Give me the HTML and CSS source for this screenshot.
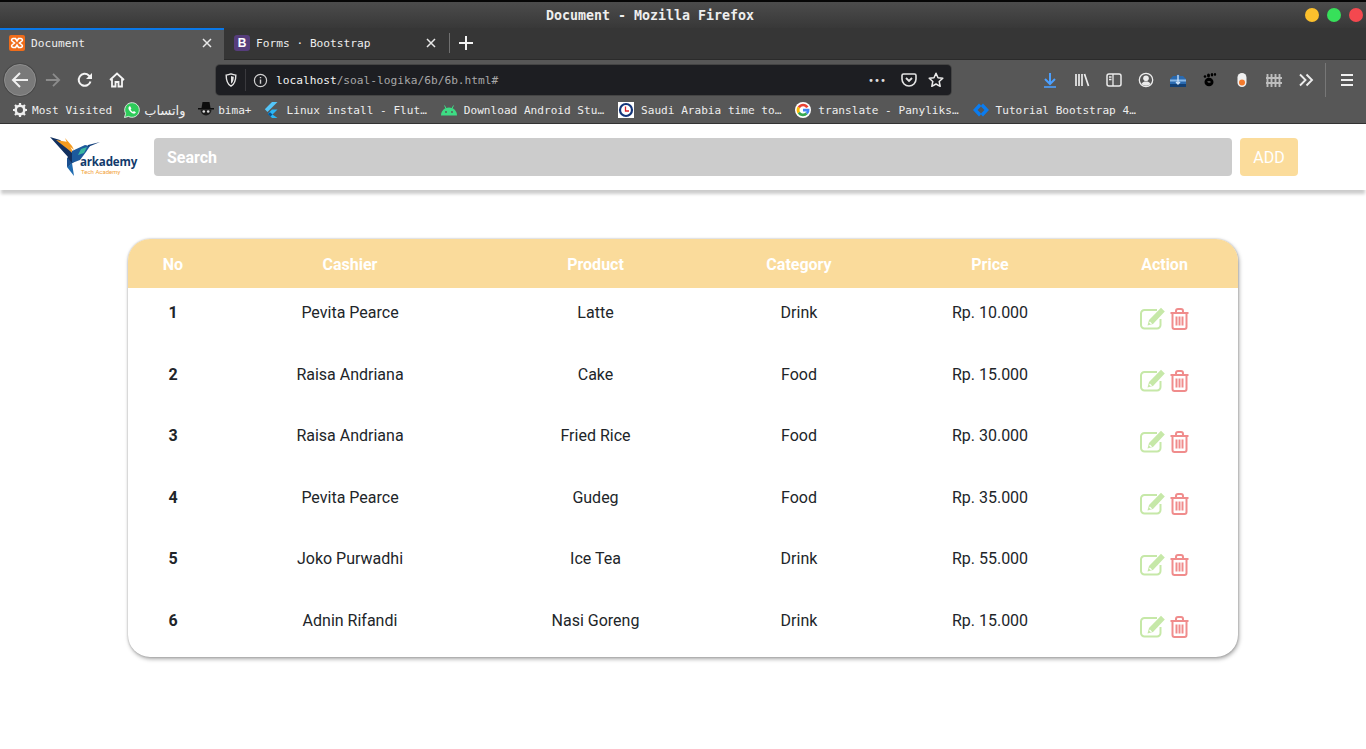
FILE: index.html
```html
<!DOCTYPE html>
<html lang="en">
<head>
<meta charset="utf-8">
<title>Document</title>
<link rel="stylesheet" href="styles.css">
</head>
<body>
<svg class="defs" width="0" height="0">
  <symbol id="edit" viewBox="0 0 25 23">
    <path d="M17 3H4.500A3.500 3.500 0 0 0 1 6.500V18a3.500 3.500 0 0 0 3.500 3.500H17a3.500 3.500 0 0 0 3.500-3.500v-6" fill="none" stroke="currentColor" stroke-width="2"/>
    <path d="M21 .8L24.800 4.600 13 17l-5.500 1.500L9 13z" fill="currentColor"/>
    <path d="M9.500 15l2 2" stroke="#fff" stroke-width="1.200"/>
  </symbol>
  <symbol id="trash" viewBox="0 0 19 22">
    <path d="M.5 5h18M6 5V3a2 2 0 0 1 2-2h3a2 2 0 0 1 2 2v2M2.500 5v14a2 2 0 0 0 2 2h10a2 2 0 0 0 2-2V5M6.500 8.500v9M9.500 8.500v9M12.500 8.500v9" fill="none" stroke="currentColor" stroke-width="2"/>
  </symbol>
</svg>

<header class="chrome">
  <div class="titlebar">
    <span class="title">Document - Mozilla Firefox</span>
    <div class="lights"><i class="light yellow"></i><i class="light green"></i><i class="light red"></i></div>
  </div>
  <div class="tabbar">
    <div class="tab active">
      <svg class="fav" viewBox="0 0 16 16"><rect width="16" height="16" rx="2" fill="#ef6c1a"/><path d="M4 3.500h2.500L8 6l1.500-2.500H12a1.500 1.500 0 0 1 1 2.500l-2.500 2 2.500 2a1.500 1.500 0 0 1-1 2.500H9.500L8 10l-1.500 2.500H4A1.500 1.500 0 0 1 3 10l2.500-2L3 6a1.500 1.500 0 0 1 1-2.500z" fill="none" stroke="#fff" stroke-width="1.600"/></svg>
      <span class="tab-label">Document</span>
      <svg class="tab-x" viewBox="0 0 12 12"><path d="M2 2l8 8M10 2l-8 8" stroke="#e8e8e8" stroke-width="1.500"/></svg>
    </div>
    <div class="tab">
      <span class="b-fav">B</span>
      <span class="tab-label">Forms · Bootstrap</span>
      <svg class="tab-x" viewBox="0 0 12 12"><path d="M2 2l8 8M10 2l-8 8" stroke="#e8e8e8" stroke-width="1.500"/></svg>
    </div>
    <i class="tab-sep"></i>
    <svg class="plus" viewBox="0 0 16 16"><path d="M8 1v14M1 8h14" stroke="#f4f4f4" stroke-width="2"/></svg>
  </div>
  <div class="navbar">
    <div class="btns">
      <div class="btn back"><svg viewBox="0 0 18 18"><path d="M17 9H2M9 2L2 9l7 7" fill="none" stroke="#f0f0f0" stroke-width="2"/></svg></div>
      <div class="btn"><svg viewBox="0 0 18 18"><path d="M1 9h15M9 2l7 7-7 7" fill="none" stroke="#8c8c8c" stroke-width="2"/></svg></div>
      <div class="btn"><svg viewBox="0 0 16 16"><path d="M13.500 9.500A6 6 0 1 1 11.800 3.400L14 5.500" fill="none" stroke="#f4f4f4" stroke-width="2"/><path d="M15 1v6H9z" fill="#f4f4f4"/></svg></div>
      <div class="btn"><svg viewBox="0 0 16 16"><path d="M1 8l7-6.500L15 8M3 7v7.500h3.500V10h3v4.500H13V7" fill="none" stroke="#f4f4f4" stroke-width="1.800"/></svg></div>
    </div>
    <div class="urlbar">
      <svg class="shield" viewBox="0 0 16 16"><path d="M2.500 2.500C5 2 6.500 1.500 8 1c1.500.5 3 1 5.500 1.500 0 6-1 10-5.500 12.500C3.500 12.500 2.500 8.500 2.500 2.500z" fill="none" stroke="#e4e4e4" stroke-width="1.600"/><path d="M8 3.500c1 .3 2 .6 3.200.9-.1 3.800-.8 6.400-3.200 8z" fill="#e4e4e4"/></svg>
      <i class="url-sep"></i>
      <svg class="info" viewBox="0 0 16 16"><circle cx="8" cy="8" r="6.500" fill="none" stroke="#d0d0d0" stroke-width="1.300"/><path d="M8 7v4.500M8 4.300v1.400" stroke="#d0d0d0" stroke-width="1.500"/></svg>
      <span class="url"><b class="host">localhost</b>/soal-logika/6b/6b.html#</span>
      <span class="dots">•••</span>
      <svg class="url-ico" viewBox="0 0 16 16"><path d="M1 3.500A1.500 1.500 0 0 1 2.500 2h11A1.500 1.500 0 0 1 15 3.500V7a7 7 0 0 1-14 0z" fill="none" stroke="#e4e4e4" stroke-width="1.600"/><path d="M5 6l3 3 3-3" fill="none" stroke="#e4e4e4" stroke-width="1.800"/></svg>
      <svg class="url-ico star" viewBox="0 0 16 16"><path d="M8 1.300l2 4.500 4.800.5-3.600 3.200 1 4.800L8 12l-4.200 2.300 1-4.800L1.200 6.300 6 5.800z" fill="none" stroke="#ececec" stroke-width="1.500" stroke-linejoin="round"/></svg>
    </div>
    <div class="btns tools">
      <div class="btn"><svg viewBox="0 0 16 16"><path d="M8 1v10M3 7l5 5 5-5" fill="none" stroke="#4c9ffe" stroke-width="2"/><path d="M2 15h12" stroke="#4c9ffe" stroke-width="1.600"/></svg></div>
      <div class="btn"><svg viewBox="0 0 16 16"><path d="M2 2v12M5 2v12M8 2v12M10.500 2l4 12" stroke="#ececec" stroke-width="1.700"/></svg></div>
      <div class="btn"><svg viewBox="0 0 16 16"><rect x="1" y="2" width="14" height="12" rx="2" fill="none" stroke="#ececec" stroke-width="1.500"/><path d="M7 2v12M3 5h2.500M3 7.500h2.500" stroke="#ececec" stroke-width="1.300"/></svg></div>
      <div class="btn"><svg viewBox="0 0 16 16"><circle cx="8" cy="8" r="6.700" fill="none" stroke="#ececec" stroke-width="1.300"/><circle cx="8" cy="6.300" r="2.800" fill="#ececec"/><path d="M3.500 12c1-2 2.500-2.500 4.500-2.500s3.500.5 4.500 2.500c-2.500 2.200-6.500 2.200-9 0z" fill="#ececec"/></svg></div>
      <div class="btn"><svg viewBox="0 0 16 16"><path d="M0 7l3-3h3l2-2 2 2h3l3 3v8H0z" fill="#2a6ab0"/><path d="M0 7.500h16v2H0z" fill="#8ab8e6"/><path d="M0 12h16v3H0z" fill="#123f73"/><path d="M8 3v9M6 10l2 2 2-2" fill="none" stroke="#cfe4fa" stroke-width="1.300"/></svg></div>
      <div class="btn"><svg viewBox="0 0 16 16"><ellipse cx="7" cy="10" rx="4.500" ry="4.300" fill="#000"/><path d="M5 9.500c1.500-.8 3-.8 4 .5-1 1-2.500 1-3 .5z" fill="#555"/><circle cx="3" cy="4.500" r="1.300" fill="#000"/><ellipse cx="6.500" cy="3.500" rx="1.500" ry="2" fill="#000"/><ellipse cx="10" cy="2.700" rx="1.300" ry="1.700" fill="#000"/><ellipse cx="13" cy="2.500" rx="1.100" ry="1.400" fill="#000"/></svg></div>
      <div class="btn"><svg viewBox="0 0 16 16"><rect x="3.500" y="1" width="9" height="14" rx="4.500" fill="#f0f0f0"/><circle cx="8" cy="10.500" r="3" fill="#f47a2c"/></svg></div>
      <div class="btn"><svg viewBox="0 0 16 16"><path d="M1.500 2v13M5.500 2v13M9.500 2v13M13.500 2v13M0 6h16M0 11h16" stroke="#bdbdbd" stroke-width="1.900"/></svg></div>
      <div class="btn"><svg viewBox="0 0 16 16"><path d="M2 2.500L7.500 8 2 13.500M8.500 2.500L14 8l-5.500 5.500" fill="none" stroke="#ececec" stroke-width="1.900"/></svg></div>
    </div>
    <i class="tool-sep"></i>
    <div class="btn"><svg viewBox="0 0 16 16"><path d="M2 3h12M2 8h12M2 13h12" stroke="#f0f0f0" stroke-width="1.800"/></svg></div>
  </div>
  <nav class="bookmarks">
    <a class="bm"><svg viewBox="0 0 16 16"><circle cx="8" cy="8" r="4.300" fill="none" stroke="#eee" stroke-width="2.600"/><path d="M8 1v3M8 12v3M1 8h3M12 8h3M3 3l2 2M11 11l2 2M13 3l-2 2M5 11l-2 2" stroke="#eee" stroke-width="2.200"/></svg>Most Visited</a>
    <a class="bm"><svg viewBox="0 0 16 16"><path d="M.5 15.500l1.100-4A7.300 7.300 0 1 1 4.500 14.400z" fill="#2ecb5a" stroke="#fff" stroke-width=".8"/><path d="M5.500 4.200c-1 .6-1.400 2-.6 3.500 1 1.800 2.500 3.200 4.300 3.800 1.200.4 2.300-.2 2.700-1.200l-2-1.200-.9.900c-1-.4-1.900-1.300-2.400-2.400l.8-.9-1-2.300z" fill="#fff"/></svg><span class="ar">واتساب</span></a>
    <a class="bm"><svg viewBox="0 0 16 16"><path d="M4.500 0h7l1 6h-9z" fill="#0c0c0c"/><path d="M0 6h16v1.500H0z" fill="#0c0c0c"/><path d="M2.500 7.500h11a5.500 6 0 0 1-11 0z" fill="#1c1c1c"/><circle cx="5.800" cy="9.500" r="1.300" fill="#ddd"/><circle cx="10.200" cy="9.500" r="1.300" fill="#ddd"/></svg>bima+</a>
    <a class="bm wide"><svg viewBox="0 0 16 16"><path d="M8 0h5.500L3.500 10 .8 7.200z" fill="#54c5f8"/><path d="M8 7.500h5.500L8.500 12.500l5 3.500H8L3.800 11.800z" fill="#29b6f6"/><path d="M6 10.200l2.600 2.300-2.200 2-2.600-2.500z" fill="#01579b"/></svg>Linux install - Flut…</a>
    <a class="bm wide"><svg viewBox="0 0 16 16"><path d="M0 13.500C0 9 3.500 5.500 8 5.500s8 3.500 8 8z" fill="#3ddc84"/><path d="M3.500 3.500L5 6.500M12.500 3.500L11 6.500" stroke="#3ddc84"/><circle cx="5" cy="10" r=".9" fill="#555"/><circle cx="11" cy="10" r=".9" fill="#555"/></svg>Download Android Stu…</a>
    <a class="bm wide"><svg viewBox="0 0 16 16"><rect width="16" height="16" fill="#fff"/><circle cx="8" cy="8" r="6" fill="none" stroke="#14357a" stroke-width="2.200"/><path d="M7.500 4.500V9H11" fill="none" stroke="#d8232a" stroke-width="1.300"/></svg>Saudi Arabia time to…</a>
    <a class="bm wide"><svg viewBox="0 0 16 16"><circle cx="8" cy="8" r="8" fill="#fff"/><path d="M13.500 4.800A6.500 6.500 0 0 0 2.700 4.500l2.200 1.700a3.800 3.800 0 0 1 6.300-.3z" fill="#ea4335"/><path d="M2.700 4.500a6.500 6.500 0 0 0 0 7l2.200-1.700a3.800 3.800 0 0 1 0-3.600z" fill="#fbbc05"/><path d="M2.700 11.500a6.500 6.500 0 0 0 10 .8l-2.100-1.700a3.800 3.800 0 0 1-5.700-.8z" fill="#34a853"/><path d="M14.500 6.800H8v2.600h3.700a3 3 0 0 1-1.100 1.200l2.100 1.700a6.500 6.500 0 0 0 1.800-5.500z" fill="#4285f4"/></svg>translate - Panyliks…</a>
    <a class="bm wide"><svg viewBox="0 0 16 16"><path d="M6 1.500L0 8l6 6.500 2.500-2.500L4.500 8l4-4zM10 1.500L16 8l-6 6.500L7.500 12l4-4-4-4z" fill="#0a7cf0"/></svg>Tutorial Bootstrap 4…</a>
  </nav>
</header>

<div class="topbar">
  <div class="logo">
    <svg class="bird" viewBox="0 0 58 42">
      <path d="M0 0l10 3 18 19-11 8 1-10z" fill="#12305f"/>
      <path d="M6 3l12 2 6 12z" fill="#f59b1f"/>
      <path d="M15 1l7 8 2 4-6-5z" fill="#f59b1f"/>
      <path d="M22 14l13-6 5 1-4 6-6 8-8 3z" fill="#1c5a9c"/>
      <path d="M31 12l6-2-3 6-6 2z" fill="#38b6a0"/>
      <path d="M38 8l12-3-12 5z" fill="#14417c"/>
      <path d="M17 30l5-4 2 13z" fill="#1f6bb0"/>
      <path d="M17 20l5 6-5 4z" fill="#1b4f8f"/>
    </svg>
    <span class="brand">arkademy</span>
    <span class="tag">Tech Academy</span>
  </div>
  <div class="search">Search</div>
  <div class="add">ADD</div>
</div>

<main class="content">
  <div class="card">
    <table class="grid">
      <colgroup><col class="c1"><col class="c2"><col class="c3"><col class="c4"><col class="c5"><col class="c6"></colgroup>
      <thead><tr><th>No</th><th>Cashier</th><th>Product</th><th>Category</th><th>Price</th><th>Action</th></tr></thead>
      <tbody>
        <tr><th>1</th><td>Pevita Pearce</td><td>Latte</td><td>Drink</td><td>Rp. 10.000</td><td><div class="acts"><svg class="ic-edit"><use href="#edit"/></svg><svg class="ic-trash"><use href="#trash"/></svg></div></td></tr>
        <tr><th>2</th><td>Raisa Andriana</td><td>Cake</td><td>Food</td><td>Rp. 15.000</td><td><div class="acts"><svg class="ic-edit"><use href="#edit"/></svg><svg class="ic-trash"><use href="#trash"/></svg></div></td></tr>
        <tr><th>3</th><td>Raisa Andriana</td><td>Fried Rice</td><td>Food</td><td>Rp. 30.000</td><td><div class="acts"><svg class="ic-edit"><use href="#edit"/></svg><svg class="ic-trash"><use href="#trash"/></svg></div></td></tr>
        <tr><th>4</th><td>Pevita Pearce</td><td>Gudeg</td><td>Food</td><td>Rp. 35.000</td><td><div class="acts"><svg class="ic-edit"><use href="#edit"/></svg><svg class="ic-trash"><use href="#trash"/></svg></div></td></tr>
        <tr><th>5</th><td>Joko Purwadhi</td><td>Ice Tea</td><td>Drink</td><td>Rp. 55.000</td><td><div class="acts"><svg class="ic-edit"><use href="#edit"/></svg><svg class="ic-trash"><use href="#trash"/></svg></div></td></tr>
        <tr><th>6</th><td>Adnin Rifandi</td><td>Nasi Goreng</td><td>Drink</td><td>Rp. 15.000</td><td><div class="acts"><svg class="ic-edit"><use href="#edit"/></svg><svg class="ic-trash"><use href="#trash"/></svg></div></td></tr>
      </tbody>
    </table>
  </div>
</main>
</body>
</html>
```
FILE: styles.css
```css
* { box-sizing: border-box; }
html, body { margin: 0; height: 749px; overflow: hidden; background: #fff; }
body { font-family: Roboto, "Liberation Sans", sans-serif; color: #212529; }
.defs { position: absolute; }

/* browser chrome */
.chrome { font-family: "DejaVu Sans Mono", "Liberation Mono", monospace; color: #f0f0f0; background: #575757; height: 124px; }
.titlebar { height: 28px; border-top: 2px solid #060606; background: linear-gradient(#4c4c4c, #383838); display: flex; align-items: center; justify-content: center; position: relative; padding-right: 66px; }
.title { font-size: 13.3px; font-weight: 700; color: #eee; }
.lights { position: absolute; right: 3px; top: 6px; display: flex; gap: 8px; }
.light { width: 14px; height: 14px; border-radius: 50%; }
.yellow { background: #fcc02d; }
.green { background: #37e05a; }
.red { background: #f4484f; }

.tabbar { height: 32px; background: #363636; display: flex; align-items: center; border-bottom: 1px solid #2b2b2b; }
.tab { width: 224px; height: 32px; display: flex; align-items: center; padding: 0 10px 1px 10px; flex: none; }
.tab.active { background: #575757; border-top: 2px solid #0a78e8; padding: 0 9px 3px 9px; margin-right: 1px; }
.fav { width: 16px; height: 16px; flex: none; }
.b-fav { width: 16px; height: 16px; flex: none; border-radius: 3px; background: #563d7c; color: #fff; font: 700 12px/16px "Liberation Sans", sans-serif; text-align: center; margin-left: -1px; }
.tab-label { font-size: 11.2px; margin-left: 6px; flex: 1; color: #eee; }
.tab-x { width: 12px; height: 12px; flex: none; margin-right: 2px; }
.tab-sep { width: 1px; height: 20px; background: #707070; flex: none; margin-bottom: 2px; }
.plus { width: 16px; height: 16px; margin-left: 8px; margin-bottom: 2px; }

.navbar { height: 40px; display: flex; align-items: center; padding: 0 3px 0 4px; }
.btns { display: flex; flex: none; }
.btn { width: 32px; height: 32px; display: flex; align-items: center; justify-content: center; flex: none; }
.btn svg { width: 16px; height: 16px; }
.back { background: #7a7a7a; border: 1px solid #8e8e8e; border-radius: 50%; box-shadow: 0 0 0 1px #4a4a4a; margin-right: 1px; }
.back svg { width: 18px; height: 18px; }
.urlbar { margin-left: 83px; width: 735px; height: 30px; background: #1d1e22; border-radius: 4px; display: flex; align-items: center; padding: 0 7px 0 8px; flex: none; box-shadow: 0 0 0 1px #444; }
.shield { width: 14px; height: 14px; flex: none; }
.url-sep { width: 1px; height: 22px; background: #3a3a3e; margin: 0 7px; flex: none; }
.info { width: 15px; height: 15px; flex: none; }
.url { font-size: 11.2px; color: #a8a8a8; margin-left: 8px; flex: 1; }
.host { font-weight: 400; color: #f4f4f4; }
.dots { font-size: 10px; letter-spacing: 0; color: #ddd; margin-right: 3px; }
.url-ico { width: 16px; height: 16px; flex: none; margin-left: 12px; }
.star { margin-left: 11px; }
.tools { margin-left: auto; }
.tool-sep { width: 1px; height: 34px; background: #777; margin: 0 5px 0 3px; flex: none; }

.bookmarks { height: 24px; display: flex; align-items: center; gap: 12px; padding: 0 0 3px 12px; border-bottom: 1px solid #333; }
.bm { display: flex; align-items: center; gap: 4px; font-size: 11.1px; color: #eee; white-space: nowrap; flex: none; }
.bm svg { width: 16px; height: 16px; flex: none; }
.wide { width: 165.25px; gap: 7px; }
.ar { font-family: "DejaVu Sans", sans-serif; font-size: 13px; width: 42px; }

/* page */
.topbar { height: 66px; background: #fff; display: flex; align-items: center; gap: 8px; padding: 0 68px 0 50px; box-shadow: 0 5px 3px -1px rgba(0, 0, 0, .2); position: relative; }
.logo { width: 88px; height: 42px; margin-right: 8px; position: relative; flex: none; margin-top: 2px; }
.bird { position: absolute; left: 0; top: 0; width: 58px; height: 42px; }
.brand { position: absolute; left: 30px; top: 19px; font: 700 11.6px/12px "Open Sans", Roboto, sans-serif; color: #123a6b; letter-spacing: -.2px; }
.tag { position: absolute; left: 31px; top: 31px; font: 400 6px/7px Roboto, sans-serif; color: #f2a33a; }
.search { flex: 1; height: 38px; background: #ccc; border-radius: 4px; padding: 1px 13px 0; color: #fff; font-weight: 700; font-size: 16px; line-height: 37px; }
.add { width: 58px; height: 38px; background: #fbdc9b; color: #fff; border-radius: 4px; text-align: center; font-size: 16px; padding-top: 1px; line-height: 37px; }

.content { padding: 49px 128px 0; }
.card { width: 1110px; border-radius: 22px; overflow: hidden; box-shadow: 1px 2px 4px rgba(0, 0, 0, .35), 0 0 2px rgba(0, 0, 0, .25); background: #fff; }
.grid { width: 1110px; table-layout: fixed; border-collapse: collapse; font-size: 16px; line-height: 24px; }
.c1 { width: 90px; } .c2 { width: 264px; } .c3 { width: 227px; }
.c4 { width: 180px; } .c5 { width: 202px; } .c6 { width: 147px; }
.grid thead tr { height: 49px; background: #fadb9b; }
.grid thead th { color: #fff; font-weight: 700; text-align: center; padding: 2px 0 0; vertical-align: middle; }
.grid tbody tr { height: 61.5px; }
.grid tbody th, .grid tbody td { text-align: center; vertical-align: top; padding: 13px 0 0; }
.grid tbody th { font-weight: 700; }
.acts { display: flex; align-items: flex-start; gap: 5px; padding: 6px 0 0 49px; }
.ic-edit { width: 25px; height: 23px; color: #c6e8a8; flex: none; }
.ic-trash { width: 19px; height: 22px; color: #f08c8c; flex: none; margin-top: 1px; }
```
